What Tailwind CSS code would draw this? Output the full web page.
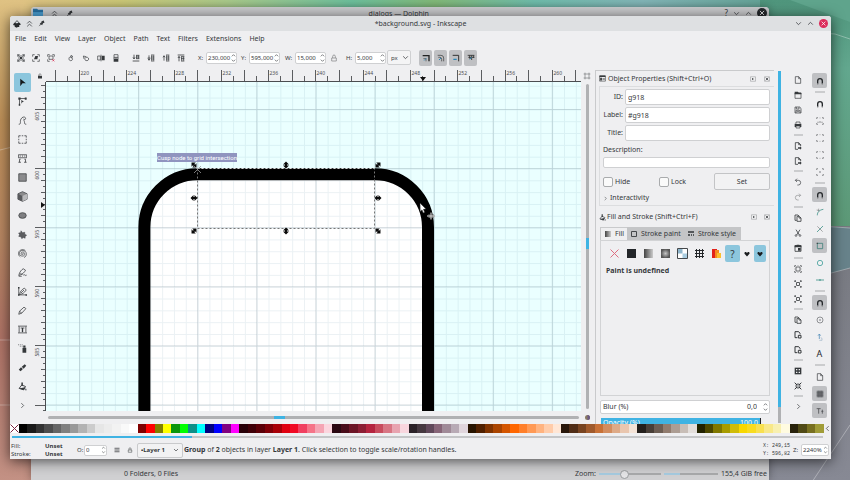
<!DOCTYPE html>
<html lang="en">
  <head>
    <meta charset="UTF-8" />
    <title>*background.svg - Inkscape</title>
    <script src="https://cdn.jsdelivr.net/npm/@tailwindcss/browser@4"></script>
  </head>
  <body class="h-screen overflow-hidden bg-[#7b9c8c] font-['Noto_Sans',sans-serif] text-[7px] leading-[10px] text-[#35383b]">
    <!-- icon sprite, every symbol on a 12x12 grid -->
    <svg class="absolute size-0">
      <defs>
        <symbol id="close" viewBox="0 0 12 12"><path d="M3.5 3.5l5 5m0-5l-5 5" stroke="currentColor" fill="none" /></symbol>
        <symbol id="up" viewBox="0 0 12 12"><path d="M2 8l4-4 4 4" stroke="currentColor" stroke-width="1.3" fill="none" /></symbol>
        <symbol id="down" viewBox="0 0 12 12"><path d="M2 4l4 4 4-4" stroke="currentColor" stroke-width="1.3" fill="none" /></symbol>
        <symbol id="right" viewBox="0 0 12 12"><path d="M4 2l4 4-4 4" stroke="currentColor" stroke-width="1.2" fill="none" /></symbol>
        <symbol id="left" viewBox="0 0 12 12"><path d="M8 2L4 6l4 4" stroke="currentColor" stroke-width="1.2" fill="none" /></symbol>
        <symbol id="double-up" viewBox="0 0 12 12"><path d="M2 6l4-4 4 4M2 11l4-4 4 4" stroke="currentColor" stroke-width="1.3" fill="none" /></symbol>
        <symbol id="pin" viewBox="0 0 12 12"><path d="M6 2l4-1 1 4-2 0-2 4-4-3 3-2zM1 11l3-4 1 1z" fill="currentColor" /></symbol>
        <symbol id="logo" viewBox="0 0 12 12"><path d="M6 .5L11.5 6c.8 1.5-2 1.8-2.5 2.5s1.5 1 .5 1.8-2.5-.2-3.5 1.2C5 10.5 3 11 2.500 10s1.5-1 0-1.600S-.2 7 .5 6z" fill="#26292b" /><path d="M6 1.500L8.500 4 7 5 6 4.200 4.800 5.200 3.500 4z" fill="#dfe5ea" /></symbol>
        <symbol id="select-all" viewBox="0 0 12 12"><path d="M3 3h6v6H3zM1 1l2 2M11 1L9 3M1 11l2-2M11 11L9 9M1 4V1h3M8 1h3v3M1 8v3h3M8 11h3V8" stroke="currentColor" fill="none" /><path d="M4.500 4.500h3v3h-3z" fill="currentColor" /></symbol>
        <symbol id="select-layers" viewBox="0 0 12 12"><path d="M1 4V1h3M8 1h3v3M1 8v3h3M8 11h3V8" stroke="currentColor" fill="none" /><path d="M3 8l2-5 4 0-1 5z" fill="currentColor" /></symbol>
        <symbol id="deselect" viewBox="0 0 12 12"><path d="M1 4V1h3M8 1h3v3M1 8v3h3M3 3h6v5H3z" stroke="currentColor" fill="none" /><path d="M8 8l3 3m0-3l-3 3" stroke="#d8385a" stroke-width="1.200" /></symbol>
        <symbol id="rotate-left" viewBox="0 0 12 12"><path d="M9 4L6 2v4zM6 4C2 4 2 10 5.500 10S9 6 7 6" stroke="currentColor" fill="none" /></symbol>
        <symbol id="rotate-right" viewBox="0 0 12 12"><path d="M2 3l4 1-3 3zM6 5c5-1 5 5 1.500 5S4 8 5 7" stroke="currentColor" fill="none" /></symbol>
        <symbol id="flip-h" viewBox="0 0 12 12"><path d="M1 3h4v6H1zM6 1v10" stroke="currentColor" fill="none" /><path d="M7 2.500h4.500v7H7z" fill="currentColor" /></symbol>
        <symbol id="flip-v" viewBox="0 0 12 12"><path d="M3 1h6v4H3zM1.500 6h9" stroke="currentColor" fill="none" /><path d="M2.500 7h7v4.500h-7z" fill="currentColor" /></symbol>
        <symbol id="z-bottom" viewBox="0 0 12 12"><path d="M1 10.500h10M3 1v6M1.500 5L3 7.500 4.500 5M6 2h5M6 4.500h5M6 7h5M7 2v5M10 2v5" stroke="currentColor" stroke-width="1.200" fill="none" /></symbol>
        <symbol id="z-lower" viewBox="0 0 12 12"><path d="M1 6h4M3 2v7M1.500 7L3 9.500 4.500 7M6 1.500h5M6 4.500h5M6 7.500h5M6 10.500h5M7 2v8M10 2v8" stroke="currentColor" stroke-width="1.100" fill="none" /></symbol>
        <symbol id="z-raise" viewBox="0 0 12 12"><path d="M3 10V3M1.500 5L3 2.500 4.500 5M6 1.500h5M6 4.500h5M6 7.500h5M6 10.500h5M7 2v8M10 2v8" stroke="currentColor" stroke-width="1.100" fill="none" /></symbol>
        <symbol id="z-top" viewBox="0 0 12 12"><path d="M1 1.500h10M3 11V4M1.500 6L3 3.500 4.500 6M6 4h5M6 7h5M6 10.500h5M7 4v6M10 4v6" stroke="currentColor" stroke-width="1.200" fill="none" /></symbol>
        <symbol id="lock" viewBox="0 0 12 12"><path d="M2 5.500h8V11H2z" fill="currentColor" /><path d="M4 6V3.500a2 2 0 0 1 4 0" stroke="currentColor" fill="none" /></symbol>
        <symbol id="unlock" viewBox="0 0 12 12"><path d="M2.500 6h7v4.500h-7zM4 6V3.500a2 2 0 0 1 4 0V6" stroke="currentColor" fill="none" /></symbol>
        <symbol id="scale-stroke" viewBox="0 0 12 12"><path d="M1 2.500h9.500V11" stroke="#222" stroke-width="2" fill="none" /><path d="M2 7h4v4" stroke="#444" fill="none" /><path d="M3 10l4-4" stroke="#2a86b8" /></symbol>
        <symbol id="scale-radius" viewBox="0 0 12 12"><path d="M1 2h5q4 0 4 4v5M2 5h2q3 0 3 3v3" stroke="#333" fill="none" /><path d="M3 9l3-3" stroke="#2a86b8" stroke-width="1.500" /></symbol>
        <symbol id="move-gradient" viewBox="0 0 12 12"><path d="M1 2h9v9" stroke="#333" stroke-width="1.500" fill="none" /><path d="M2 8h5" stroke="#2a86b8" stroke-width="2" /></symbol>
        <symbol id="move-pattern" viewBox="0 0 12 12"><path d="M1 2h10M4 2v5M7 2v7M10 2v4M2 5h9" stroke="#333" stroke-width="1.300" fill="none" /><path d="M4 8l3-3" stroke="#2a86b8" stroke-width="1.500" /></symbol>
        <symbol id="arrow" viewBox="0 0 12 12"><path d="M3 1l7.500 6H6L3 11z" fill="#15191c" /></symbol>
        <symbol id="node" viewBox="0 0 12 12"><path d="M1 2h10M2 2v9" stroke="currentColor" /><path d="M.5.5h3v3h-3zM9 .5h2.500v3H9zM1 9h2v2.500H1zM4.500 3.500L8 6.500H6L4.500 9z" fill="currentColor" /></symbol>
        <symbol id="tweak" viewBox="0 0 12 12"><path d="M1 11c4 0 1-4 3-7 2-4 7-3 6 0-.5 2-3 0-3 0M11 11C7 11 10 8 7.500 5.500" stroke="currentColor" fill="none" /></symbol>
        <symbol id="marquee" viewBox="0 0 12 12"><path d="M1 3.500V1h2.500M8.500 1H11v2.500M11 8.500V11H8.500M3.500 11H1V8.500M5 1h2M5 11h2M1 5v2M11 5v2" stroke="currentColor" fill="none" /></symbol>
        <symbol id="measure" viewBox="0 0 12 12"><path d="M.5 1h11v4H.5zM3 2v1.500M6 2v1.500M9 2v1.500" stroke="currentColor" fill="none" /><path d="M2 7v4M10 7v4M.5 11H4M8 11h3.500M2 7h1.500M10 7H8.500" stroke="currentColor" fill="none" /></symbol>
        <symbol id="rect" viewBox="0 0 12 12"><path d="M1 1h10v10H1z" fill="#8b8b8d" stroke="#3c3f42" /></symbol>
        <symbol id="cube" viewBox="0 0 12 12"><path d="M6 .7l5 2.300v6L6 11.300 1 9V3z" fill="#8b8b8d" stroke="#3c3f42" stroke-width=".8" /><path d="M6 5.500L1 3v6l5 2.300z" fill="#58595c" /><path d="M6 5.500L11 3v6l-5 2.300z" fill="#b9b9bb" /></symbol>
        <symbol id="ellipse" viewBox="0 0 12 12"><ellipse cx="6" cy="6" rx="5" ry="3.800" fill="#7f7f82" stroke="#3c3f42" /></symbol>
        <symbol id="star" viewBox="0 0 12 12"><path d="M4 1l2 2.500L9 3l0 2.500 2.500 1.500-2 1.500V11L7 10l-2 1.500L4 9 1 8.500 2 6 .8 4l2.700-.5z" fill="#5c5d60" stroke="#3c3f42" stroke-width=".6" /></symbol>
        <symbol id="spiral" viewBox="0 0 12 12"><path d="M6 6c1-1 2 1 0 1.600-2.500 0-2.500-3.600 0-3.600 4 0 4 5.500 0 5.500C.5 9.500.5 2 6 2c6.500 0 6.500 8 2 9.300M3 10.500C-.5 8 0 3 3.500 1.500 6 0 9 1 10 2.500" stroke="#4a4c4f" fill="none" /></symbol>
        <symbol id="pen" viewBox="0 0 12 12"><path d="M1 10c1-5 4-8 6-9l3 2C9 5 6 9 1 10zM3 7.500l3 1M7 9.500c2-2 3 2 4.500 0M1 11h4" stroke="currentColor" fill="none" /></symbol>
        <symbol id="bezier" viewBox="0 0 12 12"><path d="M1 1v9.500h10M2 10c1-5 4-7 6.500-8.500L11 4C8 8 6 9.500 2 10zM4 8L8 4" stroke="currentColor" fill="none" /><path d="M0 0h2v2H0zM10 9.500h2v2h-2zM0 9.500h2v2H0z" fill="currentColor" /></symbol>
        <symbol id="pencil" viewBox="0 0 12 12"><path d="M1 11l1-4L8 1.500l2.500 2L5 9.500zM2 7l3 2.500" stroke="currentColor" fill="none" /></symbol>
        <symbol id="text" viewBox="0 0 12 12"><path d="M1.500 2v8M10.500 2v8M0 1.500h12M0 10.500h12M3.500 4h5" stroke="currentColor" fill="none" /><path d="M6 4v5.500" stroke="currentColor" stroke-width="1.800" /></symbol>
        <symbol id="spray" viewBox="0 0 12 12"><path d="M6 5h5v6.500H6zM7 2h3v2.500H7z" fill="currentColor" /><path d="M0 1h1M2.500 1h1M5 1h1M2.500 3h1M5 3h1" stroke="currentColor" /></symbol>
        <symbol id="eraser" viewBox="0 0 12 12"><path d="M1 9l3-3.500L6.500 8l-3 3zM5 5L9 1.500 11 3.500 7.500 7.500z" fill="currentColor" /></symbol>
        <symbol id="bucket" viewBox="0 0 12 12"><path d="M5 4L1.500 8.500l6 2L10 6z" stroke="currentColor" stroke-width="1.200" fill="none" /><path d="M1.500 8.500L9.500 7 8 10.500zM4.500.5h2V5h-2zM10.500 8l1 3h-2z" fill="currentColor" /></symbol>
        <symbol id="panel" viewBox="0 0 12 12"><path d="M1 1.500h10v9H1z" fill="none" stroke="currentColor" /><path d="M1 1h10v2.500H1zM2 4.500h3v5H2zM6 5h4v1H6zM6 7.500h4v1H6z" fill="currentColor" /></symbol>
        <symbol id="iconify" viewBox="0 0 12 12"><path d="M1 1.500h10v9H1z" fill="none" stroke="#8c8e90" /><path d="M4 4l4 2-4 2z" fill="currentColor" /></symbol>
        <symbol id="boxed-close" viewBox="0 0 12 12"><path d="M1 1.500h10v9H1z" fill="none" stroke="#8c8e90" /><path d="M3.500 3.500l5 5m0-5l-5 5" stroke="currentColor" stroke-width="1.500" /></symbol>
        <symbol id="doc" viewBox="0 0 12 12"><path d="M2 1h5l3 3v7H2zM7 1v3h3" stroke="currentColor" fill="none" /></symbol>
        <symbol id="open" viewBox="0 0 12 12"><path d="M1.500 3h9v8h-9z" stroke="currentColor" fill="none" /><path d="M1 1h5l1 1.500h4V5H1z" fill="currentColor" /></symbol>
        <symbol id="save" viewBox="0 0 12 12"><path d="M1.500 1.500h7l2 2v7h-9zM3.500 1.500v3h4v-3M3 10.500v-4h6v4M4 8.500h4" stroke="currentColor" fill="none" /></symbol>
        <symbol id="print" viewBox="0 0 12 12"><path d="M1 4h10v5H1z" fill="currentColor" /><path d="M3 4V1.500h6V4M3 7.500h6v3H3z" stroke="currentColor" fill="#efeff1" /></symbol>
        <symbol id="import" viewBox="0 0 12 12"><path d="M6 11H2V1h5l3 3v2M7 1v3h3" stroke="currentColor" fill="none" stroke-width="1.200" /><path d="M6 8h3V6.500L11.500 9 9 11.500V10H6z" fill="currentColor" /></symbol>
        <symbol id="clone" viewBox="0 0 12 12"><path d="M9 5V3.500L7 1H1.500v9H5" stroke="currentColor" fill="none" stroke-width="1.500" /><path d="M6.500 6.500h4v4h-4z" stroke="currentColor" stroke-width="1.500" fill="none" /></symbol>
        <symbol id="undo" viewBox="0 0 12 12"><path d="M2 3.500h4.500a3.500 3.500 0 0 1 0 7H5M4.500 1L2 3.500 4.500 6" stroke="currentColor" fill="none" /></symbol>
        <symbol id="redo" viewBox="0 0 12 12"><path d="M10 3.500H5.500a3.500 3.500 0 0 0 0 7H7M7.500 1L10 3.500 7.500 6" stroke="#8c8e90" fill="none" /></symbol>
        <symbol id="copy" viewBox="0 0 12 12"><path d="M4 9.500H1.500v-8H6L7.500 3M4.500 3.500H8L10.500 6v5h-6zM7.500 3.500V6h3" stroke="currentColor" stroke-width="1.200" fill="none" /></symbol>
        <symbol id="cut" viewBox="0 0 12 12"><path d="M3 1l5 8M9 1L4 9" stroke="currentColor" stroke-width="1.200" /><circle cx="3" cy="9.800" r="1.300" fill="none" stroke="currentColor" /><circle cx="9" cy="9.800" r="1.300" fill="none" stroke="currentColor" /></symbol>
        <symbol id="paste" viewBox="0 0 12 12"><path d="M1.500 2.500h9v8.500h-9z" stroke="currentColor" stroke-width="1.200" fill="none" /><path d="M4 1h4v1h3v3H1V2h3zM6 6h4v4H6z" fill="currentColor" /></symbol>
        <symbol id="zoom-fit" viewBox="0 0 12 12"><path d="M1 3V1h2M9 1h2v2M11 9v2H9M3 11H1V9M1.500 1.500L4 4M10.500 1.500L8 4M1.500 10.500L4 8M10.500 10.500L8 8" stroke="currentColor" fill="none" /><circle cx="6" cy="6" r="2.500" stroke="currentColor" fill="none" stroke-width="1.200" /></symbol>
        <symbol id="zoom-sel" viewBox="0 0 12 12"><path d="M1 3V1h2M9 1h2v2M11 9v2H9M3 11H1V9M3 3h6v6H3zM5.500 1h1M5.500 11h1M1 6h1M10 6h1" stroke="currentColor" fill="none" /></symbol>
        <symbol id="group" viewBox="0 0 12 12"><path d="M1 1h10v10H1z" fill="currentColor" /><path d="M3 3h2v2H3zM7 3h2v2H7zM3 7h2v2H3zM7 7h2v2H7z" fill="#efeff1" /></symbol>
        <symbol id="ungroup" viewBox="0 0 12 12"><path d="M1 1l3.500 3.500M11 1L7.500 4.500M1 11l3.500-3.500M11 11L7.500 7.500" stroke="currentColor" stroke-width="1.500" /><path d="M2 5h3V2M10 5H7V2M2 7h3v3M10 7H7v3" stroke="currentColor" fill="none" /></symbol>
        <symbol id="magnet" viewBox="0 0 12 12"><path d="M2.500 11V6a3.500 3.500 0 0 1 7 0v5" fill="none" stroke="#25282b" stroke-width="2" /><path d="M1.500 10h2M8.500 10h2" stroke="#efeff1" stroke-width=".7" /></symbol>
        <symbol id="snap-bbox" viewBox="0 0 12 12"><path d="M1 3V1h2M9 1h2v2M11 9v2H9M3 11H1V9M5.500 1h1M5.500 11h1" stroke="#606366" fill="none" /></symbol>
        <symbol id="snap-edge" viewBox="0 0 12 12"><path d="M1 3V1h2M9 1h2v2M11 9v2H9M3 11H1V9M3 7v2M6 6v3M9 7v2M6 1v1" stroke="#606366" fill="none" /></symbol>
        <symbol id="snap-center" viewBox="0 0 12 12"><path d="M1 3V1h2M9 1h2v2M11 9v2H9M3 11H1V9M5 6h2M6 5v2" stroke="#606366" fill="none" /></symbol>
        <symbol id="snap-path" viewBox="0 0 12 12"><path d="M2 11C2 6 5 3 11 2" stroke="#3d9288" stroke-width="1.200" fill="none" /><path d="M1 3l4 1M4 1l0 4" stroke="#7c7e80" /></symbol>
        <symbol id="snap-cross" viewBox="0 0 12 12"><path d="M1.500 10.500l9-9" stroke="#3d9288" stroke-width="1.200" /><path d="M2 2l8 8" stroke="#7c7e80" /></symbol>
        <symbol id="snap-corner" viewBox="0 0 12 12"><path d="M2 2h8v8H2z" stroke="#3d7f78" stroke-width="1.200" fill="none" /><path d="M1 1h2v2H1z" fill="#45484b" /></symbol>
        <symbol id="snap-circle" viewBox="0 0 12 12"><circle cx="6" cy="6" r="4" stroke="#43a09b" stroke-width="1.200" fill="none" /></symbol>
        <symbol id="snap-mid" viewBox="0 0 12 12"><path d="M0 6h12" stroke="#3d9288" stroke-width="1.200" /><path d="M5 5h2v2H5z" fill="#3d9288" /></symbol>
        <symbol id="snap-center-obj" viewBox="0 0 12 12"><circle cx="6" cy="6" r="4.500" stroke="#606366" fill="none" /><path d="M5 6h2M6 5v2" stroke="#606366" /></symbol>
        <symbol id="snap-rotate" viewBox="0 0 12 12"><path d="M5 9V2M3 4l2-2.500L7 4" stroke="#3b7fb0" fill="none" /><path d="M7 7q3 0 2 4H5" stroke="#9db4c8" fill="none" /></symbol>
        <symbol id="grid" viewBox="0 0 12 12"><path d="M1 1h10v10H1z" fill="#75777a" /><path d="M1 4.300h10M1 7.700h10M4.300 1v10M7.700 1v10" stroke="#4c4e51" stroke-width=".8" /></symbol>
        <symbol id="guide" viewBox="0 0 12 12"><path d="M1 2.500h6M4 2.500V10M9.500 4v6M8 6.500h3" stroke="#4c4e51" stroke-width="1.200" /></symbol>
        <symbol id="heart" viewBox="0 0 12 12"><path d="M6 11L1 5.500C0 2 4.500 1 6 4c1.500-3 6-2 5 1.500z" fill="#1b1e20" /></symbol>
        <symbol id="menu" viewBox="0 0 12 12"><path d="M1 2.500h10M1 6h10M1 9.500h10" stroke="currentColor" stroke-width="1.500" /></symbol>
        <symbol id="spin" viewBox="0 0 6 14"><path d="M1 5l2-2 2 2M1 9l2 2 2-2" stroke="#66696c" fill="none" /></symbol>
        <radialGradient id="soft"><stop offset="0" stop-color="#c5c5c5" /><stop offset="1" stop-color="#555" /></radialGradient>
        <linearGradient id="fade"><stop offset="0" stop-color="#444" /><stop offset="1" stop-color="#ccc" /></linearGradient>
      </defs>
    </svg>

    <div class="relative h-full">
      <!-- wallpaper -->
      <svg class="absolute inset-0 size-full" viewBox="0 0 850 480" preserveAspectRatio="none">
        <defs>
          <linearGradient id="wall-left" x2="0" y2="1">
            <stop offset="0" stop-color="#dfc283" />
            <stop offset=".25" stop-color="#bf9159" />
            <stop offset=".5" stop-color="#b98763" />
            <stop offset=".7" stop-color="#b07467" />
            <stop offset="1" stop-color="#c39184" />
          </linearGradient>
          <linearGradient id="wall-top">
            <stop offset="0" stop-color="#dfc283" />
            <stop offset=".12" stop-color="#cbc777" />
            <stop offset=".25" stop-color="#a9c98a" />
            <stop offset=".4" stop-color="#6dbf9c" />
            <stop offset=".5" stop-color="#82b978" />
            <stop offset=".62" stop-color="#6fbcab" />
            <stop offset=".75" stop-color="#82b5b7" />
            <stop offset="1" stop-color="#509780" />
          </linearGradient>
          <linearGradient id="wall-right" x2="0" y2="1">
            <stop offset="0" stop-color="#4f957c" />
            <stop offset=".3" stop-color="#62a78e" />
            <stop offset="1" stop-color="#5c9876" />
          </linearGradient>
          <linearGradient id="wall-slate" x2="0" y2="1">
            <stop offset="0" stop-color="#76787f" />
            <stop offset="1" stop-color="#878994" />
          </linearGradient>
        </defs>
        <path d="M0 0h120v480H0z" fill="url(#wall-left)" />
        <path d="M20 0h830v16H20z" fill="url(#wall-top)" />
        <path d="M760 0h90v228H760z" fill="url(#wall-right)" />
        <path d="M760 0h90v22L790 0z" fill="#5fa48c" />
        <path d="M760 226h90v254H760z" fill="url(#wall-slate)" />
        <path d="M820 276l30-8v-40l-30-2z" fill="#67828a" />
        <path d="M820 33l15 1 15 5M820 226l30 2M820 276l30-8M800 500q20-30 50-75M0 150l12-3M0 340h12M0 405h12" fill="none" stroke="#ffffff55" />
      </svg>

      <!-- file manager behind -->
      <section class="absolute top-[7px] right-[81px] bottom-0 left-[31px] flex flex-col justify-between rounded-t-sm bg-[#d2d2d4] shadow-[0_0_8px_#0005]">
        <header class="flex h-3 items-center justify-between rounded-t-sm bg-[#c9cacc] pr-[2px] pl-[2px]">
          <div class="flex items-center gap-2">
            <svg class="size-[10px]" viewBox="0 0 12 12"><path d="M0 1h5l1 1h6v9H0z" fill="#276fa0" /><path d="M0 5h12v6H0z" fill="#4ba3d8" /></svg>
            <svg class="size-[7px]"><use href="#double-up" /></svg>
            <svg class="size-[7px]"><use href="#pin" /></svg>
          </div>
          <h2 class="pt-[2px]">dialogs — Dolphin</h2>
          <div class="flex items-center gap-[5px] text-[8px]">
            <span>?</span>
            <svg class="size-[7px]"><use href="#down" /></svg>
            <svg class="size-[7px]"><use href="#up" /></svg>
            <svg class="size-[10px] rounded-full bg-[#25282b] text-white"><use href="#close" /></svg>
          </div>
        </header>
        <footer class="flex h-3 items-center bg-[#d0d0d2] pr-[2px] pl-[93px]">
          <span>0 Folders, 0 Files</span>
          <label for="zoom" class="ml-auto">Zoom:</label>
          <input id="zoom" type="range" value="40" class="mx-[3px] h-[9px] w-[62px] appearance-none bg-[linear-gradient(90deg,#a5cbe0_40%,#a8a9ab_40%)] bg-[length:100%_2px] bg-center bg-no-repeat [&::-webkit-slider-thumb]:size-[9px] [&::-webkit-slider-thumb]:appearance-none [&::-webkit-slider-thumb]:rounded-full [&::-webkit-slider-thumb]:border [&::-webkit-slider-thumb]:border-[#9b9d9f] [&::-webkit-slider-thumb]:bg-[#e4e4e6]" />
          <div class="mr-[3px] flex h-[2px] w-[54px] bg-[#a8a9ab]"><div class="w-4 bg-[#a5cbe0]"></div></div>
          <span>155,4 GiB free</span>
        </footer>
      </section>

      <!-- drawing window -->
      <section class="absolute top-4 right-[19px] bottom-[21px] left-[10px] flex flex-col overflow-hidden rounded-t-[3px] bg-[#efeff1] shadow-[0_2px_14px_#000a]">
        <header class="grid h-[15px] shrink-0 grid-cols-[1fr_auto_1fr] items-center bg-[#dee0e2] pr-[3px] pl-[3px]">
          <div class="flex items-center gap-[5px]">
            <svg class="size-[8px]"><use href="#logo" /></svg>
            <svg class="size-[7px]"><use href="#double-up" /></svg>
            <svg class="size-[7px]"><use href="#pin" /></svg>
          </div>
          <h1>*background.svg - Inkscape</h1>
          <div class="flex items-center justify-end gap-[5px]">
            <button aria-label="Minimize"><svg class="size-[7px]"><use href="#down" /></svg></button>
            <button aria-label="Maximize"><svg class="size-[7px]"><use href="#up" /></svg></button>
            <button aria-label="Close" class="rounded-full bg-[#dc2d5c] text-white"><svg class="size-[9px]"><use href="#close" /></svg></button>
          </div>
        </header>

        <nav class="flex h-4 shrink-0 items-center gap-2 pl-[5px]">
          <button>File</button>
          <button>Edit</button>
          <button>View</button>
          <button>Layer</button>
          <button>Object</button>
          <button>Path</button>
          <button>Text</button>
          <button>Filters</button>
          <button>Extensions</button>
          <button>Help</button>
        </nav>

        <div class="flex h-[23px] shrink-0 items-center pb-[2px] pl-[3px] text-[6px] [&>div>button]:flex [&>div>button]:h-4 [&>div>button]:w-[15px] [&>div>button]:items-center [&>div>button]:justify-center [&>div>button>svg]:size-2">
          <div class="flex">
            <button aria-label="Select all"><svg><use href="#select-all" /></svg></button>
            <button aria-label="Select all in layers"><svg><use href="#select-layers" /></svg></button>
            <button aria-label="Deselect"><svg><use href="#deselect" /></svg></button>
          </div>
          <div class="ml-[5px] flex">
            <button aria-label="Rotate left"><svg><use href="#rotate-left" /></svg></button>
            <button aria-label="Rotate right"><svg><use href="#rotate-right" /></svg></button>
            <button aria-label="Flip horizontal"><svg><use href="#flip-h" /></svg></button>
            <button aria-label="Flip vertical"><svg><use href="#flip-v" /></svg></button>
          </div>
          <div class="ml-[5px] flex">
            <button aria-label="Lower to bottom"><svg><use href="#z-bottom" /></svg></button>
            <button aria-label="Lower"><svg><use href="#z-lower" /></svg></button>
            <button aria-label="Raise"><svg><use href="#z-raise" /></svg></button>
            <button aria-label="Raise to top"><svg><use href="#z-top" /></svg></button>
          </div>
          <label for="pos-x" class="ml-[10px] w-2">X:</label>
          <div class="flex h-3 w-[31px] items-center rounded-xs border border-[#cfd0d2] bg-white">
            <input id="pos-x" value="230,000" class="w-full min-w-0 pl-px outline-none" />
            <svg class="h-3 w-[5px] shrink-0"><use href="#spin" /></svg>
          </div>
          <label for="pos-y" class="ml-1 w-2">Y:</label>
          <div class="flex h-3 w-[31px] items-center rounded-xs border border-[#cfd0d2] bg-white">
            <input id="pos-y" value="595,000" class="w-full min-w-0 pl-px outline-none" />
            <svg class="h-3 w-[5px] shrink-0"><use href="#spin" /></svg>
          </div>
          <label for="size-w" class="ml-[5px] w-[10px]">W:</label>
          <div class="flex h-3 w-[31px] items-center rounded-xs border border-[#cfd0d2] bg-white">
            <input id="size-w" value="15,000" class="w-full min-w-0 pl-px outline-none" />
            <svg class="h-3 w-[5px] shrink-0"><use href="#spin" /></svg>
          </div>
          <div><button aria-label="Lock ratio"><svg class="text-[#7b7d80]"><use href="#unlock" /></svg></button></div>
          <label for="size-h" class="ml-[5px] w-[9px]">H:</label>
          <div class="flex h-3 w-[31px] items-center rounded-xs border border-[#cfd0d2] bg-white">
            <input id="size-h" value="5,000" class="w-full min-w-0 pl-px outline-none" />
            <svg class="h-3 w-[5px] shrink-0"><use href="#spin" /></svg>
          </div>
          <div class="relative ml-px flex items-center">
            <select aria-label="Unit" class="h-[15px] w-6 appearance-none rounded-xs border border-[#cfd0d2] bg-[#f4f4f5] pl-[3px]"><option>px</option></select>
            <svg class="pointer-events-none absolute right-[2px] size-[7px]"><use href="#down" /></svg>
          </div>
          <div class="ml-2 flex gap-[2px] [&>button]:w-[13px]! [&>button]:rounded-xs [&>button]:bg-[#bfc0c3]">
            <button aria-label="Scale stroke width"><svg><use href="#scale-stroke" /></svg></button>
            <button aria-label="Scale rounded corners"><svg><use href="#scale-radius" /></svg></button>
            <button aria-label="Move gradients"><svg><use href="#move-gradient" /></svg></button>
            <button aria-label="Move patterns"><svg><use href="#move-pattern" /></svg></button>
          </div>
        </div>

        <main class="flex min-h-0 flex-1">
          <!-- toolbox -->
          <div class="flex w-6 shrink-0 flex-col items-center pt-[3px] [&>button]:flex [&>button]:h-[19px] [&>button]:w-[17px] [&>button]:shrink-0 [&>button]:items-center [&>button]:justify-center [&>button>svg]:size-[9px]">
            <button aria-label="Selector" class="rounded-xs bg-[#8cc6dd]"><svg><use href="#arrow" /></svg></button>
            <button aria-label="Node"><svg><use href="#node" /></svg></button>
            <button aria-label="Tweak"><svg><use href="#tweak" /></svg></button>
            <button aria-label="Zoom"><svg><use href="#marquee" /></svg></button>
            <button aria-label="Measure"><svg><use href="#measure" /></svg></button>
            <button aria-label="Rectangle"><svg><use href="#rect" /></svg></button>
            <button aria-label="3D box"><svg class="size-[11px]!"><use href="#cube" /></svg></button>
            <button aria-label="Ellipse"><svg><use href="#ellipse" /></svg></button>
            <button aria-label="Star"><svg><use href="#star" /></svg></button>
            <button aria-label="Spiral"><svg><use href="#spiral" /></svg></button>
            <button aria-label="Pencil"><svg><use href="#pen" /></svg></button>
            <button aria-label="Pen"><svg><use href="#bezier" /></svg></button>
            <button aria-label="Calligraphy"><svg><use href="#pencil" /></svg></button>
            <button aria-label="Text"><svg><use href="#text" /></svg></button>
            <button aria-label="Spray"><svg><use href="#spray" /></svg></button>
            <button aria-label="Eraser"><svg><use href="#eraser" /></svg></button>
            <button aria-label="Paint bucket"><svg><use href="#bucket" /></svg></button>
            <button aria-label="More tools"><svg class="size-[7px]!"><use href="#right" /></svg></button>
          </div>

          <!-- rulers and canvas -->
          <div class="grid min-w-0 flex-1 grid-cols-[12px_1fr_12px] grid-rows-[12px_1fr_13px]">
            <div class="flex items-center justify-center"><svg class="size-[6px]"><use href="#lock" /></svg></div>
            <svg id="ruler-x" class="h-full w-full border-b border-[#4b4d50]"></svg>
            <svg class="size-2 self-center justify-self-center text-[#77797c]" viewBox="0 0 12 12"><path d="M3 1v10M9 1v10M1 3h10M1 9h10" stroke="currentColor" /></svg>
            <svg id="ruler-y" class="h-full w-full border-r border-[#4b4d50]"></svg>
            <svg class="h-full w-full bg-[#eaffff]">
              <defs>
                <pattern id="minor" x="33.400" y="27.400" width="11.820" height="11.820" patternUnits="userSpaceOnUse"><path d="M0 .5h12M.5 0v12" stroke="#5a8ba8" stroke-opacity=".12" /></pattern>
                <pattern id="major" x="33" y="27" width="59.100" height="59.100" patternUnits="userSpaceOnUse"><path d="M0 .5h60M.5 0v60" stroke="#4b6470" stroke-opacity=".22" /></pattern>
                <g id="handle-h"><path d="M-3.500 0l3-3v2h1v-2l3 3-3 3v-2h-1v2z" /></g>
              </defs>
              <path d="M98 340V145a53 53 0 0 1 53-53H329a53 53 0 0 1 53 53V340" fill="#fff" />
              <rect width="100%" height="100%" fill="url(#minor)" />
              <rect width="100%" height="100%" fill="url(#major)" />
              <path d="M98.400 340V145.300a53 53 0 0 1 53-53H329a53 53 0 0 1 53 53V340" fill="none" stroke="#000" stroke-width="12" />
              <path d="M151.500 86.500h177v60h-177z" fill="none" stroke="#777" stroke-dasharray="2 2" />
              <path d="M151.500 86.500h177" stroke="#ddd" stroke-dasharray="2 2" />
              <g fill="#0a0a0a">
                <use href="#handle-h" transform="translate(148 83) rotate(45)" />
                <use href="#handle-h" transform="translate(240 83) rotate(90)" />
                <use href="#handle-h" transform="translate(332 83) rotate(-45)" />
                <use href="#handle-h" transform="translate(148 116)" />
                <use href="#handle-h" transform="translate(332 116)" />
                <use href="#handle-h" transform="translate(148 149) rotate(-45)" />
                <use href="#handle-h" transform="translate(240 149) rotate(90)" />
                <use href="#handle-h" transform="translate(332 149) rotate(45)" />
              </g>
              <path d="M148 84l7 7m0-7l-7 7" stroke="#9a9a9a" stroke-width=".8" />
              <rect x="111" y="71" width="80" height="9" fill="#9094bf" />
              <text x="151" y="78" text-anchor="middle" class="fill-white font-[Roboto,sans-serif] text-[6px]">Cusp node to grid intersection</text>
              <path d="M374 121l6 6-2.500.3 1.200 3-1.500.6-1.200-3-1.800 1.600z" fill="#fff" stroke="#222" stroke-width=".5" />
              <path d="M381 134h8M385 130v8M382.500 132.500l5 3M387.500 132.500l-5 3" stroke="#666" stroke-width="1.200" />
              <path d="M381 134h8M385 131v6" stroke="#ddd" stroke-width=".8" />
            </svg>
            <div class="flex justify-center py-[2px]">
              <div class="flex w-[3px] flex-col rounded-full bg-[#b0b1b3] pt-[154px]"><div class="h-[11px] bg-[#3fb3e3]"></div></div>
            </div>
            <div></div>
            <div class="flex flex-col justify-center px-[2px]">
              <div class="h-[3px] rounded-full bg-[#b0b1b3] pl-[226px]"><div class="h-full w-[11px] bg-[#3fb3e3]"></div></div>
            </div>
            <svg class="size-[5px] self-center justify-self-center" viewBox="0 0 6 6"><circle cx="3" cy="3" r="3" fill="#8a7a62" /><path d="M3 0a3 3 0 0 1 0 6z" fill="#6c5a86" /></svg>
          </div>

          <!-- dialogs -->
          <div class="ml-[2px] flex w-[179px] shrink-0 flex-col overflow-hidden border-t border-l border-[#c9cacc] pl-[3px] text-[7px]">
            <header class="flex h-[15px] shrink-0 items-center gap-[2px] pr-1">
              <svg class="size-[7px]"><use href="#panel" /></svg>
              <h2>Object Properties (Shift+Ctrl+O)</h2>
              <button aria-label="Iconify" class="ml-auto"><svg class="size-[6px]"><use href="#iconify" /></svg></button>
              <button aria-label="Close dialog" class="ml-[6px]"><svg class="size-[6px]"><use href="#boxed-close" /></svg></button>
            </header>
            <div class="flex h-[120px] shrink-0 flex-col border border-r-0 border-[#dcdddf] pt-[2px] pr-1 pl-[3px]">
              <div class="grid grid-cols-[20px_1fr] items-center gap-x-[2px] gap-y-[2px] text-right">
                <label for="obj-id">ID:</label>
                <input id="obj-id" value="g918" class="h-4 min-w-0 rounded-xs border border-[#cfd0d2] bg-white pl-[2px]" />
                <label for="obj-label">Label:</label>
                <input id="obj-label" value="#g918" class="h-4 min-w-0 rounded-xs border border-[#cfd0d2] bg-white pl-[2px]" />
                <label for="obj-title">Title:</label>
                <input id="obj-title" class="h-4 min-w-0 rounded-xs border border-[#cfd0d2] bg-white pl-[2px]" />
              </div>
              <label for="obj-desc" class="pt-1 pb-[2px]">Description:</label>
              <input id="obj-desc" class="h-[11px] w-full shrink-0 rounded-xs border border-[#cfd0d2] bg-white" />
              <div class="mt-[5px] flex items-center">
                <label class="flex w-14 items-center gap-[2px]"><input type="checkbox" class="size-[10px] appearance-none rounded-xs border border-[#a9abad] bg-[#fafafa]" />Hide</label>
                <label class="flex items-center gap-[2px]"><input type="checkbox" class="size-[10px] appearance-none rounded-xs border border-[#a9abad] bg-[#fafafa]" />Lock</label>
                <button class="ml-auto h-[17px] w-14 rounded-xs border border-[#c3c4c6] bg-[#f2f2f3]">Set</button>
              </div>
              <button class="mt-[3px] flex items-center gap-[2px]"><svg class="size-[5px]"><use href="#right" /></svg>Interactivity</button>
            </div>
            <header class="mt-1 flex h-[14px] shrink-0 items-center gap-px pr-1">
              <svg class="size-[7px]"><use href="#bucket" /></svg>
              <h2>Fill and Stroke (Shift+Ctrl+F)</h2>
              <button aria-label="Iconify" class="ml-auto"><svg class="size-[6px]"><use href="#iconify" /></svg></button>
              <button aria-label="Close dialog" class="ml-[6px]"><svg class="size-[6px]"><use href="#boxed-close" /></svg></button>
            </header>
            <div class="mt-[3px] flex h-[13px] shrink-0 pl-px">
              <button class="flex w-[27px] items-center gap-1 border-t border-l border-[#c9cacc] pl-1"><svg class="size-[6px] shrink-0" viewBox="0 0 6 6"><path d="M0 0h6v6H0z" fill="url(#fade)" /></svg>Fill</button>
              <button class="flex w-[57px] items-center gap-1 bg-[#c4c5c7] pl-1"><svg class="size-[6px] shrink-0" viewBox="0 0 6 6"><path d="M.5.5h5v5h-5z" fill="none" stroke="#45484b" /></svg>Stroke paint</button>
              <button class="flex w-[57px] items-center gap-1 bg-[#c4c5c7] pl-1"><svg class="size-[6px] shrink-0" viewBox="0 0 6 6"><path d="M0 0h6v2H0zM0 3h2v2H0zM3 3h1v2H3zM5 3h1v2H5z" fill="#55585b" /></svg>Stroke style</button>
            </div>
            <div class="mr-1 ml-px min-h-[120px] flex-1 border border-[#d2d3d5] pt-1 pl-[5px]">
              <div class="flex [&>button]:flex [&>button]:h-[17px] [&>button]:w-[17px] [&>button]:items-center [&>button]:justify-center [&>button>svg]:size-[9px]">
                <button aria-label="No paint"><svg viewBox="0 0 9 9"><path d="M.5.5l8 8m0-8l-8 8" stroke="#dd6d80" /></svg></button>
                <button aria-label="Flat color"><svg viewBox="0 0 9 9"><path d="M0 0h9v9H0z" fill="#232629" /></svg></button>
                <button aria-label="Linear gradient"><svg viewBox="0 0 9 9"><path d="M0 0h9v9H0z" fill="url(#fade)" /></svg></button>
                <button aria-label="Radial gradient"><svg viewBox="0 0 9 9"><path d="M0 0h9v9H0z" fill="url(#soft)" /></svg></button>
                <button aria-label="Mesh gradient"><svg class="size-[11px]!" viewBox="0 0 11 11"><path d="M.5.5h10v10H.5z" fill="#fff" stroke="#45484b" /><path d="M1 1h4.500v4.500H1z" fill="#8fb6cc" /><path d="M5.500 5.500H10V10H5.500z" fill="#a9cce0" /></svg></button>
                <button aria-label="Pattern"><svg viewBox="0 0 9 9"><path d="M0 1.500h9M0 4.500h9M0 7.500h9M1.500 0v9M4.500 0v9M7.500 0v9" stroke="#232629" /></svg></button>
                <button aria-label="Swatch"><svg viewBox="0 0 9 9"><path d="M0 0h5v9H0z" fill="#e2231a" /><path d="M3 1h4v8H3z" fill="#f58a1f" /><path d="M5 4h4v5H5z" fill="#fbc02d" /></svg></button>
                <button aria-label="Unknown paint" class="w-[15px]! rounded-xs bg-[#8cc6dd] text-[10px]">?</button>
                <button aria-label="Fill rule even-odd" class="w-[14px]!"><svg class="size-[6px]!"><use href="#heart" /></svg></button>
                <button aria-label="Fill rule nonzero" class="w-3! rounded-xs bg-[#8cc6dd]"><svg class="size-[6px]!"><use href="#heart" /></svg></button>
              </div>
              <p class="mt-1 font-bold">Paint is undefined</p>
            </div>
            <div class="mt-1 mr-1 ml-px flex h-[14px] shrink-0 items-center rounded-xs border border-[#cfd0d2] bg-white pl-[2px]">
              <label for="blur">Blur (%)</label>
              <input id="blur" value="0,0" class="ml-auto w-8 text-right outline-none" />
              <svg class="mr-px ml-[6px] h-3 w-[5px]"><use href="#spin" /></svg>
            </div>
            <div class="mt-1 mr-[13px] ml-[2px] flex h-[6px] shrink-0 justify-between overflow-hidden border-r border-[#232629] bg-[#3fb3e3] px-[2px] text-white">
              <span>Opacity (%)</span><span>100,0</span>
            </div>
          </div>
          <div class="mx-1 my-px flex w-[3px] shrink-0 flex-col bg-[#b0b1b3] pb-4"><div class="flex-1 bg-[#3fb3e3]"></div></div>

          <!-- commands bar -->
          <div class="flex w-[26px] shrink-0 flex-col items-center pt-[2px] [&>button]:flex [&>button]:h-[15px] [&>button]:w-[15px] [&>button]:shrink-0 [&>button]:items-center [&>button]:justify-center [&>button>svg]:size-2 [&>hr]:my-[2px] [&>hr]:h-[2px] [&>hr]:w-[9px] [&>hr]:shrink-0 [&>hr]:border-0 [&>hr]:bg-[#cbccce]">
            <button aria-label="New"><svg><use href="#doc" /></svg></button>
            <button aria-label="Open"><svg><use href="#open" /></svg></button>
            <button aria-label="Save"><svg><use href="#save" /></svg></button>
            <button aria-label="Print"><svg><use href="#print" /></svg></button>
            <hr />
            <button aria-label="Import"><svg><use href="#import" /></svg></button>
            <button aria-label="Export"><svg><use href="#import" /></svg></button>
            <hr />
            <button aria-label="Undo"><svg><use href="#undo" /></svg></button>
            <button aria-label="Redo"><svg><use href="#redo" /></svg></button>
            <hr />
            <button aria-label="Copy"><svg><use href="#copy" /></svg></button>
            <button aria-label="Cut"><svg><use href="#cut" /></svg></button>
            <button aria-label="Paste"><svg><use href="#paste" /></svg></button>
            <hr />
            <button aria-label="Zoom selection"><svg><use href="#zoom-sel" /></svg></button>
            <button aria-label="Zoom drawing"><svg><use href="#zoom-fit" /></svg></button>
            <button aria-label="Zoom page"><svg><use href="#zoom-fit" /></svg></button>
            <hr />
            <button aria-label="Duplicate"><svg><use href="#copy" /></svg></button>
            <button aria-label="Clone"><svg><use href="#clone" /></svg></button>
            <button aria-label="Unlink clone"><svg><use href="#clone" /></svg></button>
            <hr />
            <button aria-label="Group"><svg><use href="#group" /></svg></button>
            <button aria-label="Ungroup"><svg><use href="#ungroup" /></svg></button>
            <hr />
            <button aria-label="More commands"><svg class="size-[7px]!"><use href="#right" /></svg></button>
          </div>

          <!-- snap bar -->
          <div class="mr-[3px] flex w-[17px] shrink-0 flex-col items-center pt-[2px] [&>button]:my-px [&>button]:flex [&>button]:h-[15px] [&>button]:w-[15px] [&>button]:shrink-0 [&>button]:items-center [&>button]:justify-center [&>button]:rounded-xs [&>button>svg]:size-2 [&>hr]:my-[2px] [&>hr]:h-[2px] [&>hr]:w-[10px] [&>hr]:shrink-0 [&>hr]:border-0 [&>hr]:bg-[#cbccce]">
            <button aria-label="Enable snapping" class="bg-[#bfc0c3]"><svg><use href="#magnet" /></svg></button>
            <hr />
            <button aria-label="Snap bounding boxes"><svg><use href="#magnet" /></svg></button>
            <button aria-label="Snap edges"><svg><use href="#snap-edge" /></svg></button>
            <button aria-label="Snap corners"><svg><use href="#snap-bbox" /></svg></button>
            <button aria-label="Snap edge midpoints"><svg><use href="#snap-bbox" /></svg></button>
            <button aria-label="Snap centers"><svg><use href="#snap-center" /></svg></button>
            <hr />
            <button aria-label="Snap nodes" class="bg-[#bfc0c3]"><svg><use href="#magnet" /></svg></button>
            <button aria-label="Snap paths"><svg><use href="#snap-path" /></svg></button>
            <button aria-label="Snap intersections"><svg><use href="#snap-cross" /></svg></button>
            <button aria-label="Snap cusp nodes" class="bg-[#bfc0c3]"><svg><use href="#snap-corner" /></svg></button>
            <button aria-label="Snap smooth nodes"><svg><use href="#snap-circle" /></svg></button>
            <button aria-label="Snap midpoints"><svg><use href="#snap-mid" /></svg></button>
            <hr />
            <button aria-label="Snap others" class="bg-[#bfc0c3]"><svg><use href="#magnet" /></svg></button>
            <button aria-label="Snap object centers"><svg><use href="#snap-center-obj" /></svg></button>
            <button aria-label="Snap rotation centers"><svg><use href="#snap-rotate" /></svg></button>
            <button aria-label="Snap text baselines" class="text-[9px] text-[#25282b]">A</button>
            <hr />
            <button aria-label="Snap page border"><svg><use href="#doc" /></svg></button>
            <button aria-label="Snap grids" class="bg-[#bfc0c3]"><svg><use href="#grid" /></svg></button>
            <button aria-label="Snap guides" class="bg-[#bfc0c3]"><svg><use href="#guide" /></svg></button>
          </div>
        </main>

        <!-- palette -->
        <div class="flex h-[9px] shrink-0 items-center">
          <svg class="size-[9px] shrink-0 bg-white" viewBox="0 0 9 9"><path d="M.5.5l8 8m0-8l-8 8" stroke="#7c2540" /></svg>
          <div id="palette" class="flex h-full flex-1"></div>
          <svg class="h-[7px] w-[7px] shrink-0"><use href="#left" /></svg>
        </div>
        <div class="mx-[2px] mt-[3px] mr-2 flex h-[2px] shrink-0 items-center bg-[#c4c5c7]"><div class="h-[2px] w-[180px] bg-[#3fb3e3]"></div></div>

        <!-- status bar -->
        <footer class="flex h-[21px] shrink-0 items-center pt-[3px] pr-[2px] pl-px">
          <dl class="grid w-[66px] grid-cols-[34px_1fr] text-[6px] leading-[8px]">
            <dt>Fill:</dt>
            <dd class="font-bold">Unset</dd>
            <dt>Stroke:</dt>
            <dd class="font-bold">Unset</dd>
          </dl>
          <label for="opacity" class="w-[7px] text-[6px]">O:</label>
          <div class="flex h-[11px] w-[23px] items-center rounded-xs border border-[#cfd0d2] bg-white text-[6px]">
            <input id="opacity" value="0" class="w-full min-w-0 pl-px outline-none" />
            <svg class="h-[10px] w-[5px] shrink-0"><use href="#spin" /></svg>
          </div>
          <button aria-label="Layer visibility" class="ml-[7px]"><svg class="size-[6px]"><use href="#menu" /></svg></button>
          <button aria-label="Layer lock" class="ml-[7px]"><svg class="size-[6px]"><use href="#unlock" /></svg></button>
          <div class="relative ml-1 flex items-center">
            <select aria-label="Layer" class="h-[15px] w-[46px] appearance-none rounded-xs border border-[#c9cacc] bg-[#f2f2f3] pl-[3px] text-[6px] font-bold"><option>•Layer 1</option></select>
            <svg class="pointer-events-none absolute right-1 size-[6px]"><use href="#down" /></svg>
          </div>
          <p class="ml-px"><b>Group</b> of <b>2</b> objects in layer <b>Layer 1</b>. Click selection to toggle scale/rotation handles.</p>
          <dl class="ml-auto grid grid-cols-[9px_18px] font-['Liberation_Mono',monospace] text-[5px] leading-[8px]">
            <dt>X:</dt>
            <dd>249,15</dd>
            <dt>Y:</dt>
            <dd>596,82</dd>
          </dl>
          <label for="zoom-level" class="mx-[3px] text-[6px]">Z:</label>
          <div class="flex h-3 w-[28px] items-center rounded-xs border border-[#cfd0d2] bg-white text-[6px]">
            <input id="zoom-level" value="2240%" class="w-full min-w-0 pl-px outline-none" />
            <svg class="h-[10px] w-[5px] shrink-0"><use href="#spin" /></svg>
          </div>
        </footer>
      </section>
    </div>

    <script>
      const unit = 11.82;
      const NS = "http://www.w3.org/2000/svg";

      function add(parent, tag, attrs, text) {
        const el = document.createElementNS(NS, tag);
        for (const key in attrs) el.setAttribute(key, attrs[key]);
        if (text) el.textContent = text;
        parent.appendChild(el);
      }

      // horizontal ruler, user unit 220 sits 33px from the left
      const rulerX = document.getElementById("ruler-x");
      let d = "";
      for (let n = 218; n <= 264; n++) {
        const x = Math.round(33 + (n - 220) * unit) + 0.5;
        d += `M${x} ${n % 2 ? 6 : 0}V12`;
        if (n % 4 === 0 && n < 264)
          add(rulerX, "text", { x: x + 1, y: 5, class: "text-[5px] fill-[#4b4d50]" }, String(n));
      }
      add(rulerX, "path", { d, stroke: "#5b5d60", fill: "none" });
      add(rulerX, "path", { d: "M374 7h6l-3 4z", fill: "#111" });

      // vertical ruler, 605 sits 27px from the top
      const rulerY = document.getElementById("ruler-y");
      d = "";
      for (let n = -4; n <= 56; n++) {
        const y = Math.round(27 + (n * unit) / 2) + 0.5;
        d += `M${n % 10 === 0 ? 1 : n % 2 ? 9 : 7} ${y}H12`;
        if (n >= 0 && n < 50 && n % 10 === 0)
          add(
            rulerY,
            "text",
            { transform: `translate(5 ${y + 11}) rotate(-90)`, class: "text-[5px] fill-[#4b4d50]" },
            String(605 - n / 2)
          );
      }
      add(rulerY, "path", { d, stroke: "#5b5d60", fill: "none" });
      add(rulerY, "path", { d: "M7 120v6l4-3z", fill: "#111" });

      const colors = (
        "000 1a1a1a 333 4d4d4d 666 808080 999 b3b3b3 ccc e6e6e6 ececec f2f2f2 f9f9f9 fff " +
        "800000 f00 808000 ff0 0a960a 0f0 0c8f88 0ff 000080 00f 800080 f0f " +
        "280008 400008 5c0008 800008 a80008 e00010 f00a24 f04060 f57488 f5a5b4 fbd5de " +
        "2b0812 480c1a 6c1526 8c1e34 b4243f c84c5e d87684 e8a4b0 f8d6de " +
        "2b2228 453840 60485a 876578 a08a98 b8aab5 e0d5dc " +
        "281400 502000 803300 aa4400 d45500 ff6600 ff7f2a ff9955 ffb380 ffccaa ffe6d5 " +
        "28170b 502d16 784421 a05a2c c87137 d38d5f deaa87 e9c6af f4e3d7 " +
        "241f1c 483e37 6c5d53 917c6f ac9d93 c8beb7 e3dedb " +
        "222200 4c4800 807800 a89c00 d0bc08 f8d800 f8dc20 f8e050 f8e888 f8f0b0 fffbe0 " +
        "28220b 504a16 787021 a09c38"
      ).split(" ");
      const palette = document.getElementById("palette");
      for (const color of colors) {
        const swatch = document.createElement("button");
        swatch.className = "h-full flex-1";
        swatch.style.background = "#" + color;
        swatch.ariaLabel = "#" + color;
        palette.appendChild(swatch);
      }
    </script>
  </body>
</html>
